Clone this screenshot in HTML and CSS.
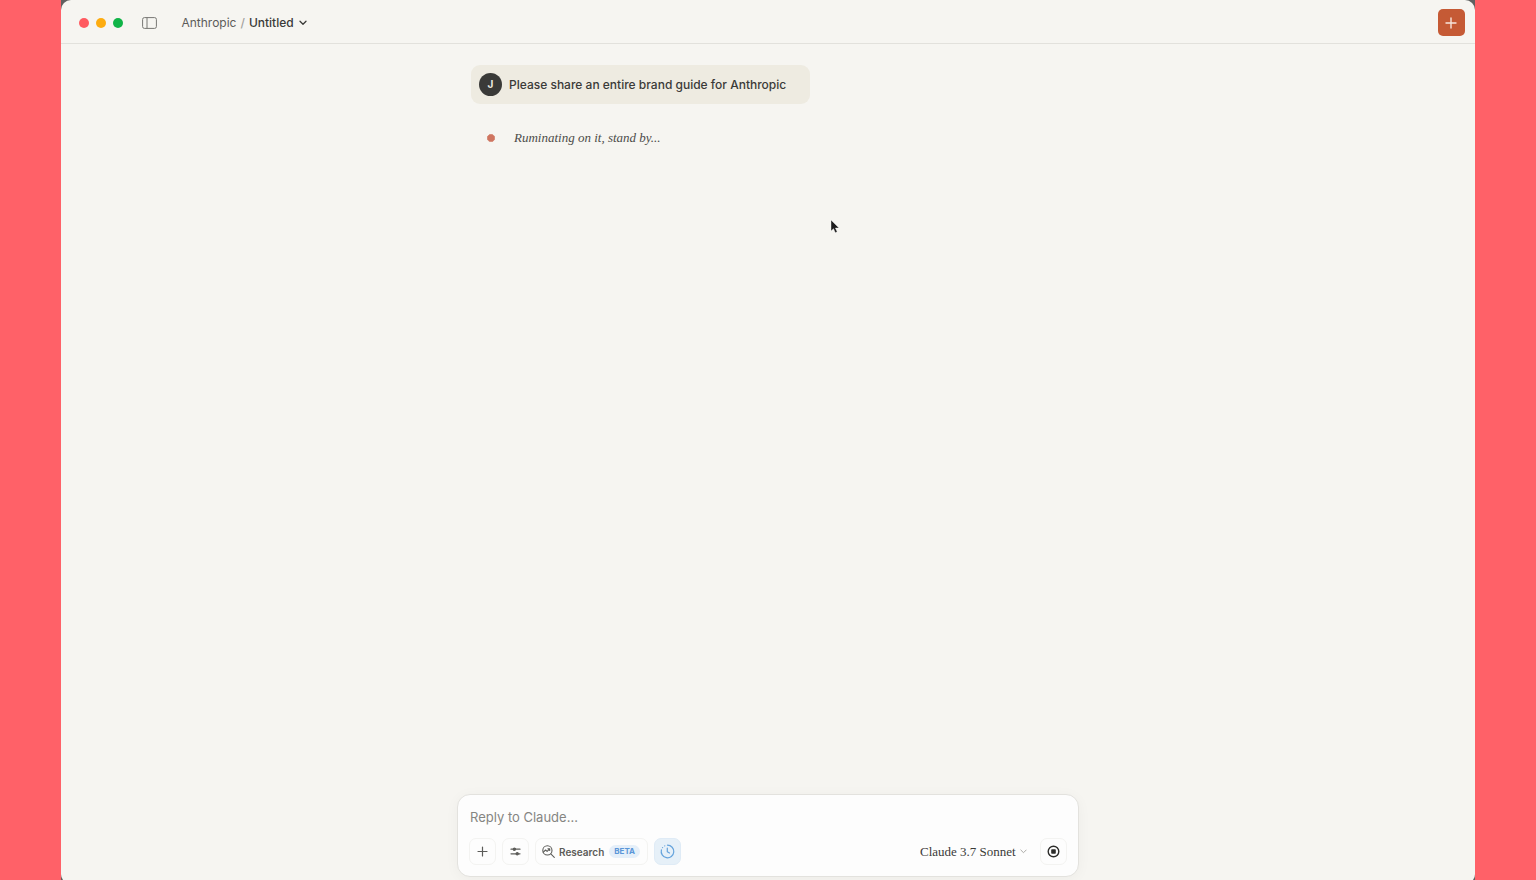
FILE: index.html
```html
<!DOCTYPE html>
<html lang="en">
<head>
    <meta charset="UTF-8">
    <meta name="viewport" content="width=device-width, initial-scale=1.0">
    <title>Claude</title>
    <link rel="stylesheet" href="styles.css">
</head>
<body>
    <div class="desktop">
        <div class="window">
            <!-- Title bar -->
            <header class="titlebar">
                <div class="lights">
                    <span class="light red"></span>
                    <span class="light yellow"></span>
                    <span class="light green"></span>
                </div>
                <button class="sidebar-btn" type="button" aria-label="Toggle sidebar">
                    <svg width="15" height="12" viewBox="0 0 15 12" fill="none" stroke="currentColor">
                        <rect x="0.6" y="0.6" width="13.8" height="10.8" rx="1.8"/>
                        <path d="M5 0.6v10.8"/>
                    </svg>
                </button>
                <nav class="breadcrumb">
                    <a href="#">Anthropic</a>
                    <span class="slash">/</span>
                    <button class="title-btn" type="button">
                        Untitled
                        <svg width="8" height="6" viewBox="0 0 8 6" fill="none" stroke="currentColor" stroke-width="1.3" stroke-linecap="round" stroke-linejoin="round">
                            <path d="M1 1.2l3 3 3-3"/>
                        </svg>
                    </button>
                </nav>
                <button class="new-btn" type="button" aria-label="New chat">
                    <svg width="12" height="12" viewBox="0 0 12 12" fill="none" stroke="currentColor" stroke-width="1.4" stroke-linecap="round">
                        <path d="M6 1v10M1 6h10"/>
                    </svg>
                </button>
            </header>

            <!-- Conversation -->
            <main class="chat">
                <div class="user-message">
                    <span class="avatar">J</span>
                    <p>Please share an entire brand guide for Anthropic</p>
                </div>
                <div class="thinking">
                    <svg class="spark" width="8" height="8" viewBox="0 0 8 8" fill="currentColor">
                        <path d="M2.6 0.5h2.8L7.6 2.4v3L5.6 7.6H2.5L0.4 5.6V2.5z" stroke="currentColor" stroke-width="0.6" stroke-linejoin="round"/>
                    </svg>
                    <p>Ruminating on it, stand by...</p>
                </div>
            </main>

            <!-- Reply box -->
            <form class="composer">
                <input class="reply" type="text" placeholder="Reply to Claude..." aria-label="Reply to Claude">
                <div class="tools">
                    <button class="tool" type="button" aria-label="Add">
                        <svg width="11" height="11" viewBox="0 0 11 11" fill="none" stroke="currentColor" stroke-width="1.2" stroke-linecap="round">
                            <path d="M5.5 1v9M1 5.5h9"/>
                        </svg>
                    </button>
                    <button class="tool" type="button" aria-label="Settings">
                        <svg width="11" height="11" viewBox="0 0 11 11" fill="none" stroke="currentColor" stroke-width="1.2" stroke-linecap="round">
                            <path d="M1 3.2h9M1 7.8h9"/>
                            <circle cx="4.4" cy="3.2" r="1.1" fill="currentColor"/>
                            <circle cx="7.2" cy="7.8" r="1.1" fill="currentColor"/>
                        </svg>
                    </button>
                    <button class="tool research" type="button">
                        <svg width="13" height="13" viewBox="0 0 13 13" fill="none" stroke="currentColor" stroke-width="1.1" stroke-linecap="round" stroke-linejoin="round">
                            <circle cx="5.4" cy="5.4" r="4.6"/>
                            <path d="M8.8 8.8l3.5 3.5M1.3 7.2l2.3-2.2 1.5 1.3 2.5-2.4M5.9 3.7h1.8v1.7"/>
                        </svg>
                        Research
                        <span class="beta">BETA</span>
                    </button>
                    <button class="tool active" type="button" aria-label="Extended thinking">
                        <svg width="15" height="15" viewBox="0 0 15 15" fill="none" stroke="currentColor" stroke-width="1.2" stroke-linecap="round" stroke-linejoin="round">
                            <path d="M7.5 1.2a6.3 6.3 0 1 1-6.1 4.7"/>
                            <path d="M2.5 3.7l.1-.1M4.7 1.9l.1-.1"/>
                            <path d="M7.3 4v3.7l2.2 1.3"/>
                        </svg>
                    </button>
                    <div class="model">
                        <select aria-label="Model">
                            <option>Claude 3.7 Sonnet</option>
                        </select>
                        <svg width="7" height="5" viewBox="0 0 7 5" fill="none" stroke="currentColor" stroke-linecap="round" stroke-linejoin="round">
                            <path d="M0.8 1l2.7 2.7L6.2 1"/>
                        </svg>
                    </div>
                    <button class="tool stop" type="button" aria-label="Stop">
                        <svg width="13" height="13" viewBox="0 0 13 13" fill="none" stroke="currentColor" stroke-width="1.4">
                            <circle cx="6.5" cy="6.5" r="5.3"/>
                            <rect x="4.2" y="4.2" width="4.6" height="4.6" rx="0.8" fill="currentColor" stroke="none"/>
                        </svg>
                    </button>
                </div>
            </form>
        </div>

        <svg class="cursor" width="10" height="15" viewBox="0 0 10 15">
            <path d="M1 1v11l2.5-2.3 1.8 4 1.9-.9-1.8-3.8H9z" fill="#1c1c1c" stroke="#ffffff" stroke-width="0.4"/>
        </svg>
    </div>
</body>
</html>
```

FILE: styles.css
```css
* {
    box-sizing: border-box;
}
body {
    margin: 0;
    font-family: Inter, "Liberation Sans", sans-serif;
    font-size: 12px;
    color: #3a3a38;
    background-color: #ff6168;
}
p {
    margin: 0;
}
button {
    font: inherit;
    color: inherit;
    background: none;
    border: none;
    padding: 0;
    cursor: pointer;
}
svg {
    display: block;
    flex-shrink: 0;
}
.desktop {
    position: relative;
    height: 100vh;
    padding: 0 4%;
    overflow: hidden;
}
.window {
    display: flex;
    flex-direction: column;
    height: calc(100vh + 4px);
    background-color: #f6f5f1;
    border-radius: 10px;
}
/* dark wallpaper behind the rounded corners */
.desktop::before {
    content: "";
    position: absolute;
    z-index: -1;
    top: 0;
    bottom: 0;
    left: 4%;
    right: 4%;
    background-color: #606060;
}

/* Title bar */
.titlebar {
    display: flex;
    align-items: center;
    height: 44px;
    padding: 2px 10px 0 18px;
    border-bottom: 1px solid #e2e1dc;
    flex-shrink: 0;
}
.lights {
    display: flex;
    gap: 7px;
}
.light {
    width: 10px;
    height: 10px;
    border-radius: 50%;
}
.red {
    background-color: #ff5a60;
}
.yellow {
    background-color: #fdac10;
}
.green {
    background-color: #10b447;
}
.sidebar-btn {
    margin-left: 19px;
    color: #777773;
}
.breadcrumb {
    display: flex;
    align-items: center;
    gap: 4px;
    margin-left: 24px;
    font-weight: 500;
}
.breadcrumb a {
    color: #5c5c59;
    text-decoration: none;
    font-weight: 400;
}
.slash {
    color: #a3a29d;
}
.title-btn {
    display: flex;
    align-items: center;
    gap: 5px;
}
.new-btn {
    display: flex;
    align-items: center;
    justify-content: center;
    width: 27px;
    height: 27px;
    margin-left: auto;
    border-radius: 5px;
    background-color: #c55a35;
    color: #f7e6dd;
}

/* Conversation */
.chat {
    flex: 1;
    width: 100%;
    max-width: 594px;
    margin: 0 auto;
    padding-top: 21px;
}
.user-message {
    display: flex;
    align-items: center;
    gap: 7px;
    width: fit-content;
    height: 39px;
    padding: 0 24px 0 8px;
    border-radius: 9px;
    background-color: #eeebe1;
    font-weight: 500;
}
.avatar {
    width: 23px;
    height: 23px;
    border-radius: 50%;
    background-color: #3a3a38;
    color: #f0eee6;
    font-size: 10px;
    font-weight: 700;
    line-height: 23px;
    text-align: center;
}
.thinking {
    display: flex;
    align-items: center;
    gap: 19px;
    margin-top: 26px;
    padding-left: 16px;
    font-family: "Liberation Serif", serif;
    font-size: 13px;
    font-style: italic;
    line-height: 16px;
    color: #4c4c49;
}
.spark {
    color: #cf7560;
}

/* Reply box */
.composer {
    width: 100%;
    max-width: 622px;
    margin: 0 auto 7px;
    padding: 12px 11px 11px;
    border: 1px solid #e3e2de;
    border-radius: 13px;
    background-color: #fdfdfd;
    box-shadow: 0 2px 14px rgba(0, 0, 0, 0.04);
}
.reply {
    display: block;
    width: 100%;
    height: 20px;
    padding: 0 1px;
    border: none;
    outline: none;
    background: none;
    font: inherit;
    font-size: 13px;
}
.reply::placeholder {
    color: #858582;
    opacity: 1;
}
.tools {
    display: flex;
    align-items: center;
    gap: 6px;
    margin-top: 11px;
}
.tool {
    display: flex;
    align-items: center;
    justify-content: center;
    width: 27px;
    height: 27px;
    border: 1px solid #f3f3f1;
    border-radius: 7px;
    color: #5c5c59;
}
.research {
    gap: 4px;
    width: auto;
    padding: 0 7px 0 6px;
    font-size: 10px;
    font-weight: 600;
}
.beta {
    margin-left: 1px;
    padding: 0 5px;
    border-radius: 7px;
    background-color: #e5eff9;
    color: #5a96d8;
    font-size: 8px;
    font-weight: 700;
    line-height: 13px;
}
.active {
    background-color: #e6f0f8;
    border-color: #dfebf6;
    color: #65a3dc;
}
.model {
    display: flex;
    align-items: center;
    gap: 4px;
    margin-left: auto;
    margin-right: 7px;
    color: #aaa9a5;
}
.model select {
    appearance: none;
    padding: 0;
    border: none;
    background: none;
    color: #3a3a38;
    font-family: "Liberation Serif", serif;
    font-size: 13px;
}
.stop {
    color: #2c2c2a;
}

.cursor {
    position: absolute;
    top: 219px;
    left: 830px;
}
```
